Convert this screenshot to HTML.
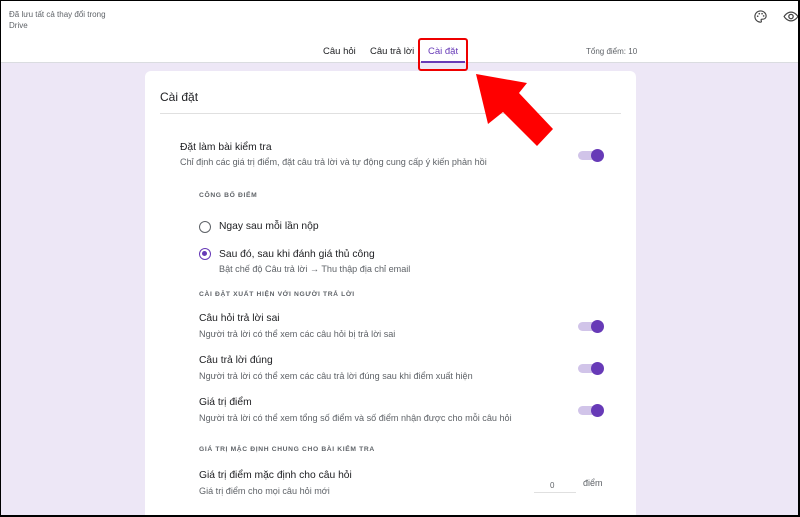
<!DOCTYPE html>
<html><head><meta charset="utf-8"><style>
*{margin:0;padding:0;box-sizing:border-box}
html,body{width:800px;height:517px;overflow:hidden}
body{background:#ede7f6;font-family:"Liberation Sans",Arial,sans-serif;position:relative;color:#202124}
.frame{position:absolute;inset:0;border:1px solid #000;border-bottom:2px solid #000;border-right:2px solid #000;z-index:10;pointer-events:none}
.hdr{position:absolute;left:0;top:0;width:800px;height:63px;background:#fff;border-bottom:1px solid #dadce0}
.saved{position:absolute;left:9px;top:9px;font-size:8px;color:#5f6368;line-height:11px}
.tab{position:absolute;top:46px;font-size:9.5px;color:#202124}
.total{position:absolute;left:586px;top:47px;font-size:8px;color:#5f6368}
.card{position:absolute;left:145px;top:71px;width:491px;height:445px;background:#fff;border-radius:6px 6px 0 0}
.t{position:absolute;font-size:10.3px;color:#202124}
.s{position:absolute;font-size:9.1px;color:#5f6368}
.h{position:absolute;font-size:6.7px;color:#5f6368;letter-spacing:.65px;font-weight:bold}
.tg{position:absolute;left:578px;width:24px;height:9px;border-radius:5px;background:#d1c4e9}
.tg::after{content:"";position:absolute;right:-2px;top:-2.5px;width:13px;height:13px;border-radius:50%;background:#673ab7}
</style></head><body>
<div class="hdr">
<div class="saved">Đã lưu tất cả thay đổi trong<br>Drive</div>
<svg style="position:absolute;left:753px;top:9px" width="15" height="15" viewBox="0 0 24 24"><path d="M12 3a9 9 0 0 0 0 18c1 0 1.5-.7 1.5-1.4 0-.8-.6-1.1-.6-1.9 0-.8.7-1.4 1.5-1.4H16a5 5 0 0 0 5-5C21 6.8 17 3 12 3z" fill="none" stroke="#444" stroke-width="1.8"/><circle cx="7.5" cy="11.5" r="1.3" fill="#444"/><circle cx="10" cy="7.5" r="1.3" fill="#444"/><circle cx="14.5" cy="7.5" r="1.3" fill="#444"/><circle cx="17" cy="11" r="1.3" fill="#444"/></svg>
<svg style="position:absolute;left:783px;top:9px" width="16" height="15" viewBox="0 0 24 24"><path d="M1 12s4-7 11-7 11 7 11 7-4 7-11 7S1 12 1 12z" fill="none" stroke="#444" stroke-width="2"/><circle cx="12" cy="12" r="3.5" fill="none" stroke="#444" stroke-width="2"/></svg>
<div class="tab" style="left:323px">Câu hỏi</div>
<div class="tab" style="left:370px">Câu trả lời</div>
<div class="tab" style="left:428px;color:#673ab7">Cài đặt</div>
<div style="position:absolute;left:421px;top:61px;width:44px;height:2px;background:#673ab7"></div>
<div style="position:absolute;left:418px;top:38px;width:50px;height:33px;border:2px solid #e00;border-radius:3px"></div>
<div class="total">Tổng điểm: 10</div>
</div>
<div class="card">
<div style="position:absolute;left:15px;top:19px;font-size:12px">Cài đặt</div>
<div style="position:absolute;left:15px;top:42px;width:461px;height:1px;background:#e0e0e0"></div>
</div>
<div class="t" style="left:180px;top:142px">Đặt làm bài kiểm tra</div>
<div class="s" style="left:180px;top:157px">Chỉ định các giá trị điểm, đặt câu trả lời và tự động cung cấp ý kiến phản hồi</div>
<div class="tg" style="top:151px"></div>
<div class="h" style="left:199px;top:192px">CÔNG BỐ ĐIỂM</div>
<div style="position:absolute;left:199px;top:221px;width:12px;height:12px;border:1.5px solid #5f6368;border-radius:50%"></div>
<div class="t" style="left:219px;top:221px">Ngay sau mỗi lần nộp</div>
<div style="position:absolute;left:199px;top:248px;width:12px;height:12px;border:1.5px solid #673ab7;border-radius:50%"><div style="position:absolute;left:2px;top:2px;width:5px;height:5px;border-radius:50%;background:#673ab7"></div></div>
<div class="t" style="left:219px;top:249px">Sau đó, sau khi đánh giá thủ công</div>
<div class="s" style="left:219px;top:264px">Bật chế độ Câu trả lời → Thu thập địa chỉ email</div>
<div class="h" style="left:199px;top:291px">CÀI ĐẶT XUẤT HIỆN VỚI NGƯỜI TRẢ LỜI</div>
<div class="t" style="left:199px;top:313px">Câu hỏi trả lời sai</div>
<div class="s" style="left:199px;top:329px">Người trả lời có thể xem các câu hỏi bị trả lời sai</div>
<div class="tg" style="top:322px"></div>
<div class="t" style="left:199px;top:355px">Câu trả lời đúng</div>
<div class="s" style="left:199px;top:371px">Người trả lời có thể xem các câu trả lời đúng sau khi điểm xuất hiện</div>
<div class="tg" style="top:364px"></div>
<div class="t" style="left:199px;top:397px">Giá trị điểm</div>
<div class="s" style="left:199px;top:413px">Người trả lời có thể xem tổng số điểm và số điểm nhận được cho mỗi câu hỏi</div>
<div class="tg" style="top:406px"></div>
<div class="h" style="left:199px;top:446px">GIÁ TRỊ MẶC ĐỊNH CHUNG CHO BÀI KIỂM TRA</div>
<div class="t" style="left:199px;top:470px">Giá trị điểm mặc định cho câu hỏi</div>
<div class="s" style="left:199px;top:486px">Giá trị điểm cho mọi câu hỏi mới</div>
<div class="s" style="left:550px;top:481px;font-size:8px">0</div>
<div style="position:absolute;left:534px;top:492px;width:42px;height:1px;background:#e0e0e0"></div>
<div class="s" style="left:583px;top:478px;font-size:9px">điểm</div>
<svg style="position:absolute;left:0;top:0;z-index:5" width="800" height="517"><polygon points="476,74 527,83 519,93 553,129 537,146 503,112 488,124" fill="#ff0000"/></svg>
<div class="frame"></div>
</body></html>
